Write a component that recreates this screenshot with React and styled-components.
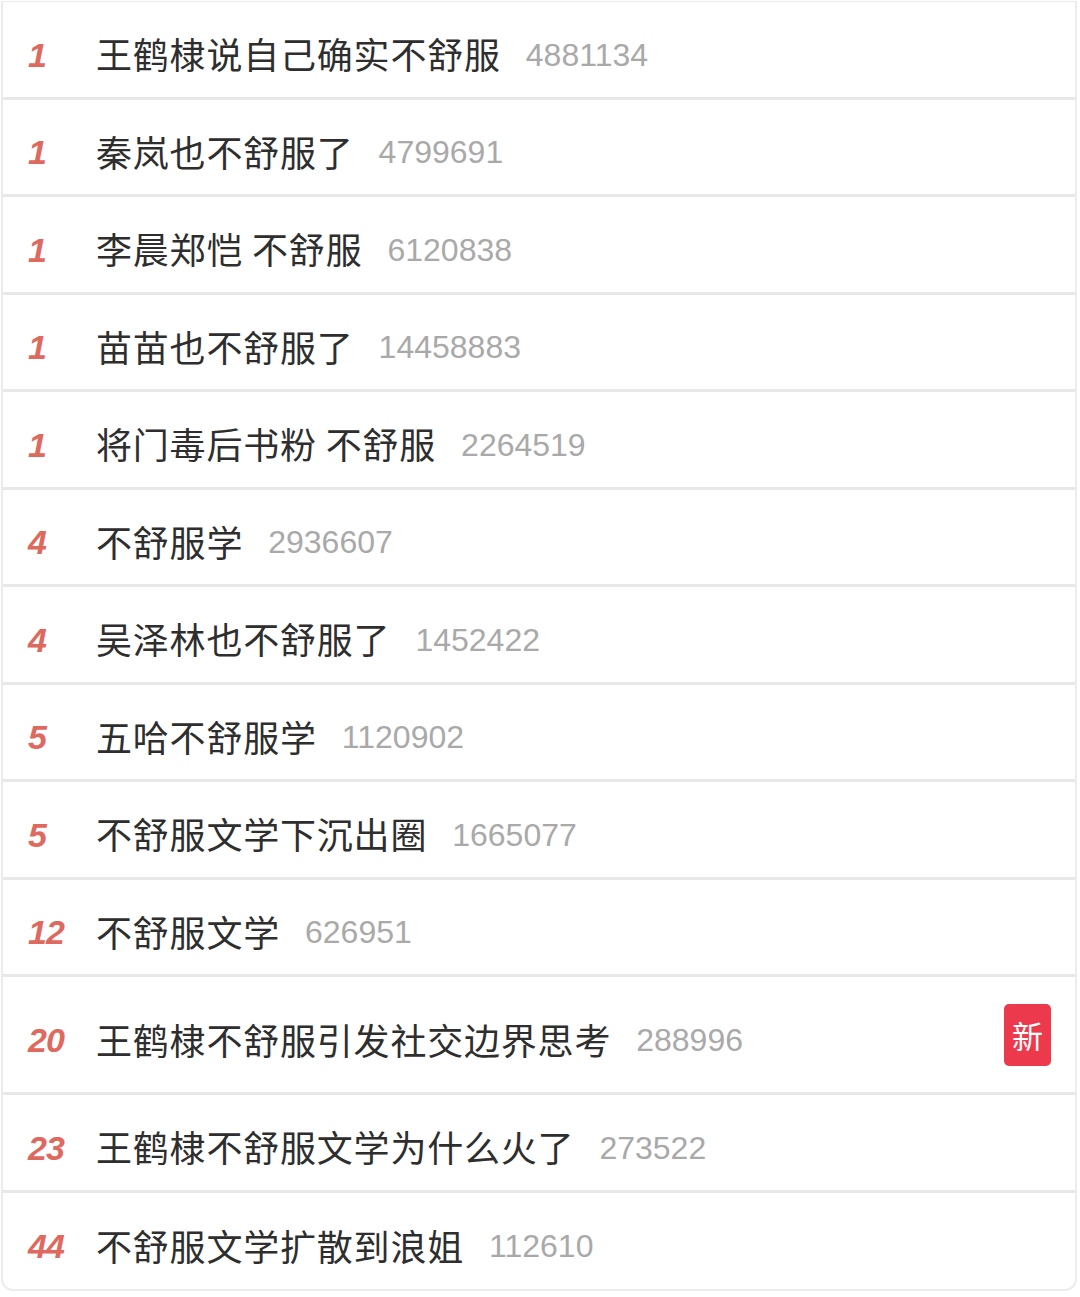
import React from "react";
import styled, { createGlobalStyle } from "styled-components";

const GlobalStyle = createGlobalStyle`
  html, body {
    margin: 0;
    padding: 0;
    background: #ffffff;
  }
  body {
    font-family: "Noto Sans CJK SC", "Noto Sans", sans-serif;
  }
`;

const items = [
  { rank: 1, title: "王鹤棣说自己确实不舒服", count: "4881134" },
  { rank: 1, title: "秦岚也不舒服了", count: "4799691" },
  { rank: 1, title: "李晨郑恺 不舒服", count: "6120838" },
  { rank: 1, title: "苗苗也不舒服了", count: "14458883" },
  { rank: 1, title: "将门毒后书粉 不舒服", count: "2264519" },
  { rank: 4, title: "不舒服学", count: "2936607" },
  { rank: 4, title: "吴泽林也不舒服了", count: "1452422" },
  { rank: 5, title: "五哈不舒服学", count: "1120902" },
  { rank: 5, title: "不舒服文学下沉出圈", count: "1665077" },
  { rank: 12, title: "不舒服文学", count: "626951" },
  { rank: 20, title: "王鹤棣不舒服引发社交边界思考", count: "288996", isNew: true },
  { rank: 23, title: "王鹤棣不舒服文学为什么火了", count: "273522" },
  { rank: 44, title: "不舒服文学扩散到浪姐", count: "112610" },
];

const Card = styled.div`
  width: 1076px;
  margin: 1px 0 0 1px;
  box-sizing: border-box;
  border: 2px solid #ececec;
  border-top-width: 1px;
  border-radius: 0 0 12px 12px;
  background: #fff;
`;

const Row = styled.div`
  display: flex;
  align-items: center;
  box-sizing: border-box;
  height: ${(p) => (p.$tall ? "118px" : "97.5px")};
  padding: 0 24px 0 25px;
  border-bottom: 3px solid #e8e8e8;

  &:last-child {
    border-bottom: none;
    height: 96px;
  }
`;

const Rank = styled.span`
  width: 68px;
  flex-shrink: 0;
  font-family: "Liberation Sans", Arial, sans-serif;
  font-style: italic;
  font-weight: 700;
  font-size: 34px;
  color: #de6a5f;
  letter-spacing: -1px;
  position: relative;
  top: 6px;
`;

const Title = styled.span`
  font-size: 36px;
  color: #2e2e2e;
  letter-spacing: 0.8px;
  position: relative;
  top: 4px;
  white-space: nowrap;
`;

const Count = styled.span`
  margin-left: 25px;
  font-family: "Liberation Sans", Arial, sans-serif;
  font-size: 32px;
  color: #a9a9a9;
  position: relative;
  top: 6px;
`;

const NewBadge = styled.span`
  margin-left: auto;
  width: 47px;
  height: 62px;
  border-radius: 5px;
  background: #ec3a4c;
  color: #fff;
  font-size: 31px;
  display: flex;
  align-items: center;
  justify-content: center;
`;

export default function App() {
  return (
    <>
      <GlobalStyle />
      <Card>
        {items.map((it, i) => (
          <Row key={i} $tall={it.isNew}>
            <Rank>{it.rank}</Rank>
            <Title>{it.title}</Title>
            <Count>{it.count}</Count>
            {it.isNew && <NewBadge>新</NewBadge>}
          </Row>
        ))}
      </Card>
    </>
  );
}
